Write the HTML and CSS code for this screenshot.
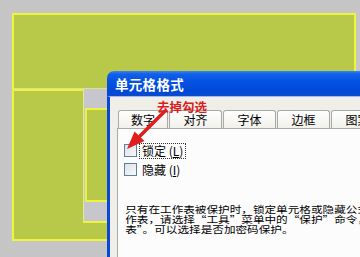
FILE: index.html
```html
<!DOCTYPE html>
<html lang="zh-CN">
<head>
<meta charset="utf-8">
<link rel="stylesheet" href="styles.css">
</head>
<body>
<div class="stage">
  <div class="sheet">
    <div class="top"></div>
    <div class="lower">
      <div class="lc"></div>
      <div class="gc"><div class="inner"></div></div>
      <div class="rest"></div>
    </div>
  </div>

  <div class="dialog">
    <div class="titlebar">单元格格式</div>
    <div class="body">
      <div class="tabs">
        <div class="tab first">数字</div>
        <div class="tab">对齐</div>
        <div class="tab">字体</div>
        <div class="tab">边框</div>
        <div class="tab">图案</div>
      </div>
      <div class="panel">
        <div class="check-row">
          <span class="box"></span>
          <span class="label focus">锁定 (<u>L</u>)</span>
        </div>
        <div class="check-row">
          <span class="box"></span>
          <span class="label">隐藏 (<u>I</u>)</span>
        </div>
        <div class="info">
          <div class="line">只有在工作表被保护时，锁定单元格或隐藏公式才有效。</div>
          <div class="line">作表，请选择“工具”菜单中的“保护”命令，然后</div>
          <div class="line">表”。可以选择是否加密码保护。</div>
        </div>
      </div>
    </div>
  </div>

  <div class="note">去掉勾选</div>
  <svg class="arrow" width="60" height="50" viewBox="120 105 60 50">
    <line x1="165" y1="111" x2="140" y2="136" stroke="#e11d1d" stroke-width="3.5" stroke-linecap="round"/>
    <polygon points="127,149 134.5,131.5 144.5,141" fill="#e11d1d"/>
  </svg>
</div>
</body>
</html>
```

FILE: styles.css
```css
html, body {
  margin: 0;
  padding: 0;
}
body {
  width: 360px;
  height: 257px;
  overflow: hidden;
  background: #c5c5c5;
  font-family: "Noto Sans CJK SC", "Noto Sans", sans-serif;
}
.stage {
  position: relative;
  width: 360px;
  height: 257px;
  overflow: hidden;
  box-sizing: border-box;
  padding: 13px 0 0 12px;
}
.sheet {
  width: 344px;
  height: 228px;
  box-sizing: border-box;
  border: 2px solid #eef33e;
  background: #b8c94a;
  display: flex;
  flex-direction: column;
}
.top {
  height: 73px;
  border-bottom: 1px solid #d9e28c;
}
.lower {
  flex: 1;
  display: flex;
}
.lc {
  width: 69px;
  border-top: 2px solid #eef33e;
}
.gc {
  width: 40px;
  height: 134px;
  box-sizing: border-box;
  background: #c7c6cc;
  border-left: 1px solid #e4e99a;
  border-bottom: 2px solid #eef33e;
  padding: 19px 0 0 1px;
}
.inner {
  height: 94px;
  box-sizing: border-box;
  border: 2px solid #eef33e;
  border-right: none;
  background: #b8c94a;
}
.rest {
  flex: 1;
}

/* dialog window */
.dialog {
  position: absolute;
  left: 107px;
  top: 71px;
  width: 280px;
  height: 200px;
  display: flex;
  flex-direction: column;
}
.titlebar {
  height: 25px;
  box-sizing: border-box;
  border-radius: 7px 7px 0 0;
  background: linear-gradient(#3b84f0 0px, #1260ea 3px, #0553e2 10px, #0048d8 20px, #0a4ccc 25px);
  color: #fff;
  font-weight: bold;
  font-size: 13.5px;
  line-height: 25px;
  padding: 1px 0 0 8px;
  letter-spacing: 0.3px;
}
.body {
  flex: 1;
  border-left: 3px solid #0848d6;
  border-top: 1px solid #9db9f0;
  background: #efeee8;
  padding: 13px 0 0 7px;
  display: flex;
  flex-direction: column;
}
.tabs {
  display: flex;
  height: 18px;
  margin-left: 1px;
}
.tab {
  width: 53px;
  flex-shrink: 0;
  box-sizing: border-box;
  margin-right: 1px;
  border: 1px solid #a6aaa8;
  border-bottom: none;
  border-radius: 3px 3px 0 0;
  background: linear-gradient(#ffffff, #f1f0ea);
  font-size: 12px;
  line-height: 17px;
  text-align: center;
  color: #000;
}
.tab.first {
  width: 50px;
}
.panel {
  flex: 1;
  background: #fcfcfd;
  border: 1px solid #a6aaa8;
  padding: 15px 0 0 6px;
}
.check-row {
  display: flex;
  align-items: center;
  height: 13px;
  margin-bottom: 6px;
  font-size: 12px;
  color: #000;
}
.box {
  width: 13px;
  height: 13px;
  box-sizing: border-box;
  border: 1px solid #5f7f9e;
  background: linear-gradient(135deg, #dde3e8, #f6f7f7);
  margin-right: 2px;
}
.label {
  padding: 0 2px;
  line-height: 14px;
  border: 1px solid transparent;
}
.label.focus {
  border: 1px dotted #333;
}
.info {
  margin-top: 28px;
  padding-left: 1px;
  font-size: 9.6px;
  line-height: 10px;
  color: #000;
  transform: scaleX(1.21);
  transform-origin: left top;
}
.line {
  white-space: nowrap;
  height: 10px;
}

/* annotation */
.note {
  position: absolute;
  left: 157px;
  top: 100px;
  color: #d91d1d;
  font-weight: bold;
  font-size: 12.5px;
  line-height: 14px;
}
.arrow {
  position: absolute;
  left: 120px;
  top: 105px;
}
```
